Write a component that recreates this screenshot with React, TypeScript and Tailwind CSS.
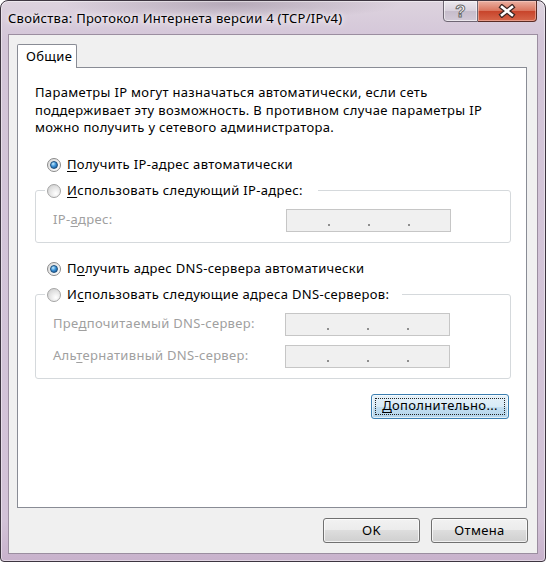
import React from 'react';

function Radio({ checked }: { checked?: boolean }) {
  if (checked) {
    return (
      <span className="w-[14px] h-[14px] shrink-0 rounded-full border border-[#8a8a8a] bg-[linear-gradient(135deg,#d9d9d9,#ffffff)] flex items-center justify-center">
        <span className="w-[8px] h-[8px] rounded-full border border-[#1d4f7c] bg-[radial-gradient(circle_at_35%_30%,#c4ecff_0%,#3d93d8_45%,#0c4a86_100%)]" />
      </span>
    );
  }
  return (
    <span className="w-[14px] h-[14px] shrink-0 rounded-full border border-[#a4a4a4] bg-[radial-gradient(circle_at_65%_70%,#ffffff_0%,#e2e2e2_55%,#c8c8c8_100%)]" />
  );
}

function IpBox() {
  return (
    <div className="w-[165px] h-[23px] border border-[#c6c6c6] bg-[#f0f0f0] flex pl-[41px] gap-[38px] pt-[14px]">
      <span className="w-[2px] h-[2px] bg-[#8e8e8e]" />
      <span className="w-[2px] h-[2px] bg-[#8e8e8e]" />
      <span className="w-[2px] h-[2px] bg-[#8e8e8e]" />
    </div>
  );
}

function WinButton({ children, focused }: { children: React.ReactNode; focused?: boolean }) {
  if (focused) {
    return (
      <button className="w-[138px] h-[25px] p-[3px] rounded-[3px] border border-[#3c7fb1] bg-[linear-gradient(#e6f2fa,#d8ebf7_50%,#c3dff1_50%,#b4d5ec)] shadow-[inset_0_0_0_1px_rgba(255,255,255,0.6)]">
        <span className="h-full border border-dotted border-[#222] flex items-center justify-center">
          {children}
        </span>
      </button>
    );
  }
  return (
    <button className="w-[97px] h-[25px] rounded-[3px] border border-[#707070] bg-[linear-gradient(#f2f2f2,#ebebeb_50%,#dddddd_50%,#cfcfcf)] shadow-[inset_0_0_0_1px_rgba(255,255,255,0.7)] flex items-center justify-center">
      {children}
    </button>
  );
}

export default function App() {
  return (
    <div className="w-[546px] h-[562px] flex flex-col rounded-t-[8px] rounded-b-[4px] border border-[#3d3540] bg-[radial-gradient(ellipse_170px_16px_at_230px_3px,rgba(110,95,115,0.35),transparent),linear-gradient(#ddd3de,#d3c5d8_40px,#d2c2d7_520px,#c8b2cc)] shadow-[inset_0_0_0_1px_rgba(255,255,255,0.45)] font-['Noto_Sans',sans-serif] text-[13px] tracking-[0.33px] text-black overflow-hidden">
      {/* Title bar */}
      <div className="h-[33px] shrink-0 flex items-start">
        <div className="pl-[7px] pt-[8px] leading-[18px] text-[13px] tracking-[0.28px] [text-shadow:0_0_8px_rgba(255,255,255,0.95),0_0_4px_rgba(255,255,255,0.9)]">
          Свойства: Протокол Интернета версии 4 (TCP/IPv4)
        </div>
        <div className="ml-auto mr-[8px] -mt-px flex">
          <div className="w-[35px] h-[22px] rounded-bl-[4px] border border-[#6e6673] bg-[linear-gradient(#ece8ee,#d8d0dc_50%,#c6bccb_50%,#d3cad7)] shadow-[inset_0_0_0_1px_rgba(255,255,255,0.55)] flex items-center justify-center">
            <span className="font-['Liberation_Sans',sans-serif] font-bold text-[17px] leading-none text-white [-webkit-text-stroke:1px_#6a6a6a]">?</span>
          </div>
          <div className="w-[59px] h-[22px] rounded-br-[4px] border border-l-0 border-[#5a2b24] bg-[linear-gradient(#eab0a2,#d9735c_50%,#c7432a_50%,#d6674b)] shadow-[inset_0_0_0_1px_rgba(255,220,210,0.45)] flex items-center justify-center">
            <svg width="18" height="14" viewBox="0 0 18 14">
              <path d="M4 3 L14 11 M14 3 L4 11" stroke="#3b2623" strokeWidth="5" strokeLinecap="square" />
              <path d="M4 3 L14 11 M14 3 L4 11" stroke="#ffffff" strokeWidth="2.6" strokeLinecap="square" />
            </svg>
          </div>
        </div>
      </div>

      {/* Client */}
      <div className="mx-[7px] mb-[7px] flex-1 border border-[#9b8ea0] bg-[#f0f0f0] flex flex-col pt-[9px] pl-[8px] pr-[10px]">
        <div className="flex">
          <div className="w-[60px] h-[24px] -mb-px relative z-10 border border-b-0 border-[#898c95] bg-white rounded-t-[2px] pl-[8px] pt-[2px] leading-[18px]">
            Общие
          </div>
        </div>

        <div className="h-[441px] border border-[#898c95] bg-white flex flex-col">
          <p className="mt-[16px] ml-[17px] leading-[17.5px] whitespace-nowrap">
            Параметры IP могут назначаться автоматически, если сеть
            <br />
            поддерживает эту возможность. В противном случае параметры IP
            <br />
            можно получить у сетевого администратора.
          </p>

          <div className="mt-[18px] ml-[29px] h-[20px] flex items-center gap-[6px]">
            <Radio checked />
            <span><u className="underline-offset-2">П</u>олучить IP-адрес автоматически</span>
          </div>

          <fieldset className="mt-[6px] ml-[17px] w-[476px] border border-[#d5d9dc] rounded-[3px] pb-[10px]">
            <legend className="ml-[9px] pl-[2px] w-[273px]">
              <div className="h-[20px] flex items-center gap-[6px]">
                <Radio />
                <span className="whitespace-nowrap"><u className="underline-offset-2">И</u>спользовать следующий IP-адрес:</span>
              </div>
            </legend>
            <div className="mt-[8px] ml-[17px] flex items-center text-[#a0a0a0]">
              <span className="w-[233px]">IP-<u className="underline-offset-2">а</u>дрес:</span>
              <IpBox />
            </div>
          </fieldset>

          <div className="mt-[16px] ml-[29px] h-[20px] flex items-center gap-[6px]">
            <Radio checked />
            <span>П<u className="underline-offset-2">о</u>лучить адрес DNS-сервера автоматически</span>
          </div>

          <fieldset className="mt-[6px] ml-[17px] w-[476px] border border-[#d5d9dc] rounded-[3px] pb-[10px]">
            <legend className="ml-[9px] pl-[2px] w-[357px]">
              <div className="h-[20px] flex items-center gap-[6px]">
                <Radio />
                <span className="whitespace-nowrap">И<u className="underline-offset-2">с</u>пользовать следующие адреса DNS-серверов:</span>
              </div>
            </legend>
            <div className="mt-[8px] ml-[17px] flex flex-col gap-[9px] text-[#a0a0a0]">
              <div className="flex items-center">
                <span className="w-[232px]">Пре<u className="underline-offset-2">д</u>почитаемый DNS-сервер:</span>
                <IpBox />
              </div>
              <div className="flex items-center">
                <span className="w-[232px]">Аль<u className="underline-offset-2">т</u>ернативный DNS-сервер:</span>
                <IpBox />
              </div>
            </div>
          </fieldset>

          <div className="mt-[15px] mr-[17px] self-end">
            <WinButton focused>
              <span><u className="underline-offset-2">Д</u>ополнительно...</span>
            </WinButton>
          </div>
        </div>

        <div className="mt-[10px] -mr-px flex justify-end gap-[11px]">
          <WinButton>OK</WinButton>
          <WinButton>Отмена</WinButton>
        </div>
      </div>
    </div>
  );
}
